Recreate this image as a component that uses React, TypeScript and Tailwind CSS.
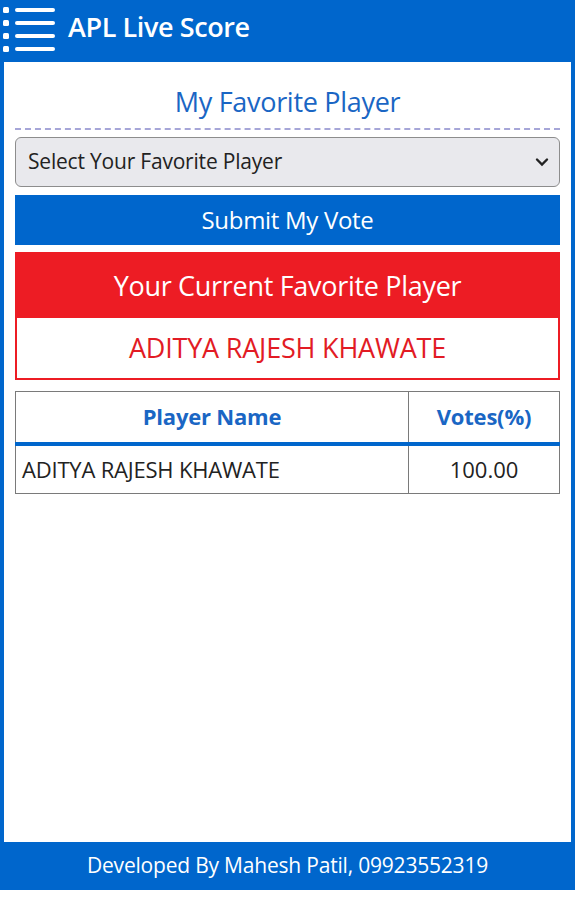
import React from 'react';

const font = { fontFamily: '"Open Sans", "Noto Sans", sans-serif' };

function MenuIcon() {
    return (
        <svg width="56" height="50" viewBox="0 0 56 50" className="shrink-0">
            {[8, 21, 34, 47].map((y) => (
                <g key={y}>
                    <rect x="3" y={y - 3} width="6" height="6" rx="1.5" fill="#fff" />
                    <rect x="15" y={y - 2} width="40" height="4" rx="2" fill="#fff" />
                </g>
            ))}
        </svg>
    );
}

export default function App() {
    return (
        <div className="w-[575px] h-[900px] bg-white flex flex-col" style={font}>
            {/* Header */}
            <div className="h-[62px] bg-[#0066cc] flex items-start pt-[2px] gap-[12px]">
                <MenuIcon />
                <h1 className="text-white font-semibold text-[27px] leading-[50px] tracking-[-0.4px]">APL Live Score</h1>
            </div>

            {/* Body */}
            <div className="flex-1 border-x-4 border-[#0066cc] px-[11px] pt-[22px] flex flex-col">
                <h2 className="text-center text-[#1a66c4] text-[27px] leading-[36px] tracking-[-0.3px]">My Favorite Player</h2>
                <div className="mt-[8px] border-t-2 border-dashed border-[#a6a6d8]" />

                <div className="mt-[7px] h-[50px] rounded-[6px] border border-[#8d8d8d] bg-[#e9e9ed] flex items-center justify-between pl-[12px] pr-[10px]">
                    <span className="text-[21px] text-[#222] tracking-[-0.2px]">Select Your Favorite Player</span>
                    <svg width="14" height="10" viewBox="0 0 14 10">
                        <path d="M2 2.5 L7 7.5 L12 2.5" stroke="#222" strokeWidth="2.4" fill="none" strokeLinecap="round" />
                    </svg>
                </div>

                <button className="mt-[8px] h-[50px] bg-[#0066cc] text-white text-[24px] tracking-[-0.3px]">Submit My Vote</button>

                <div className="mt-[7px] border-2 border-[#ed1c24]">
                    <div className="h-[64px] bg-[#ed1c24] text-white text-[27px] tracking-[-0.3px] flex items-center justify-center">
                        Your Current Favorite Player
                    </div>
                    <div className="h-[60px] bg-white text-[#e21b24] text-[27px] tracking-[-0.2px] flex items-center justify-center">
                        ADITYA RAJESH KHAWATE
                    </div>
                </div>

                <table className="mt-[11px] w-full border-collapse">
                    <thead>
                        <tr className="h-[52px]">
                            <th className="border border-[#7a7a7a] border-b-4 border-b-[#0066cc] text-[#1a66c4] text-[22px] font-bold tracking-[-0.2px]">Player Name</th>
                            <th className="w-[151px] border border-[#7a7a7a] border-b-4 border-b-[#0066cc] text-[#1a66c4] text-[22px] font-bold tracking-[-0.2px]">Votes(%)</th>
                        </tr>
                    </thead>
                    <tbody>
                        <tr className="h-[50px]">
                            <td className="border border-[#7a7a7a] pl-[6px] text-[22px] text-[#222] tracking-[-0.2px]">ADITYA RAJESH KHAWATE</td>
                            <td className="border border-[#7a7a7a] text-center text-[22px] text-[#222]">100.00</td>
                        </tr>
                    </tbody>
                </table>
            </div>

            {/* Footer */}
            <div className="h-[48px] bg-[#0066cc] flex items-center justify-center text-white text-[21px] tracking-[-0.2px]">
                Developed By Mahesh Patil, 09923552319
            </div>
            <div className="h-[10px]" />
        </div>
    );
}
